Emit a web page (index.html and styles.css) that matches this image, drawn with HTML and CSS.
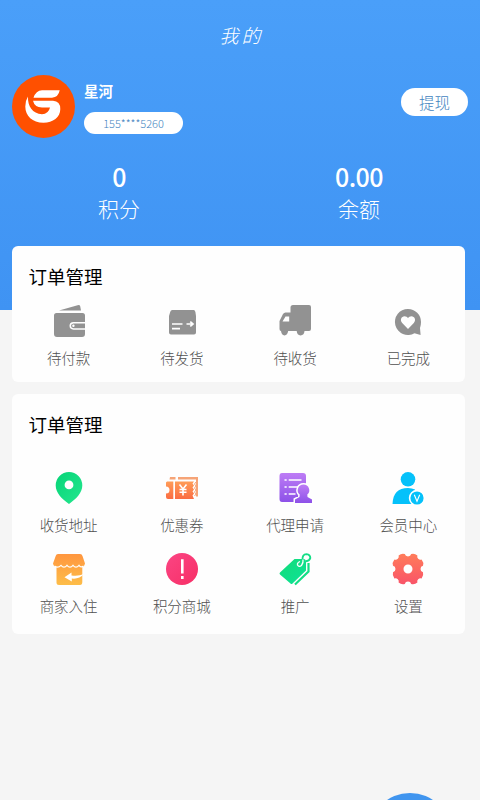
FILE: index.html
```html
<!DOCTYPE html>
<html lang="zh-CN">
<head>
<meta charset="utf-8">
<title>我的</title>
<link rel="stylesheet" href="styles.css">
</head>
<body>
<div class="screen">
  <header class="hero">
    <h1 class="page-title">我的</h1>
    <div class="profile">
      <svg class="avatar" viewBox="0 0 63 63"><circle cx="31.5" cy="31.5" r="31.5" fill="#ff5000"/><path d="M21.500 22.800Q24 15.200 30 15.200H47.700Q46.500 22 40 22.800ZM21 25.700H41Q48.300 26 48.300 34C48.300 42.500 41 47.700 31.500 47.700C20.500 47.700 13.300 41 13.300 31.500Q13.300 25.500 16 21.500C15.500 31 20.500 38.800 30 39.200Q36.500 39 38 32.500H30Q22.500 32.300 21 25.700Z" fill="#fff"/></svg>
      <div class="identity">
        <div class="name">星河</div>
        <div class="phone">155****5260</div>
      </div>
      <button class="withdraw">提现</button>
    </div>
    <div class="stats">
      <div><div class="value">0</div><div class="caption">积分</div></div>
      <div><div class="value">0.00</div><div class="caption">余额</div></div>
    </div>
  </header>

  <main class="cards">
    <section class="card orders">
      <h2>订单管理</h2>
      <div class="grid">
        <div class="item"><svg viewBox="0 0 32 32" fill="#929292"><path d="M6 5.500 25.500 0Q27 0 27.200 1.200L28 5.500Z"/><path d="M3.500 8H29.500Q32 8 32 10.500V17H20.500Q16.500 17.200 16.500 20.800Q16.500 24.500 20.500 24.700H32V29Q32 32 29 32H4Q1 32 1 29V10.500Q1 8 3.500 8Z"/><path d="M32 18.500H20.500Q18 18.700 18 20.800Q18 23 20.500 23.200H32Z"/><circle cx="20.400" cy="20.800" r="1.200" fill="#fff"/></svg><span>待付款</span></div>
        <div class="item"><svg viewBox="0 0 32 32"><path d="M6.300 5H27.700Q29 5 29.400 7L30 11V27.500Q30 29.500 28 29.500H5Q3 29.500 3 27.500V11L4.200 7Q4.700 5 6.300 5Z" fill="#929292"/><path d="M6 19H16.500M6 23.700H14M20.500 19H26.500M24.300 16.600 27 19 24.300 21.400" fill="none" stroke="#fff" stroke-width="1.700"/></svg><span>待发货</span></div>
        <div class="item"><svg viewBox="0 0 32 32"><path d="M14 0H30Q32 0 32 2V24Q32 26 30 26H25.500Q25.300 30 21.500 30.500Q18 30 17.700 26H9.200Q8.500 30 5.500 30.500Q2.500 30 2 26Q.5 25.800 .5 24V16L4 9Q5 7.500 6.500 7.500H11.500V2.500Q11.500 0 14 0Z" fill="#929292"/><path d="M6.500 11.500H10.200V16.500H3.500Z" fill="#fff"/></svg><span>待收货</span></div>
        <div class="item"><svg viewBox="0 0 32 32"><path d="M16 4A13 13 0 1 0 22.500 28.200L28.600 30 28 23Q29 20 29 17A13 13 0 0 0 16 4Z" fill="#929292"/><path d="M16 24 10.200 18C7.500 15 9.500 11.300 12.500 11.300Q15 11.300 16 13Q17 11.300 19.500 11.300C22.500 11.300 24.500 15 21.800 18Z" fill="#fff"/></svg><span>已完成</span></div>
      </div>
    </section>

    <section class="card services">
      <h2>订单管理</h2>
      <div class="grid">
        <div class="item"><svg viewBox="0 0 32 32"><defs><linearGradient id="pin" x2="1" y2="1"><stop stop-color="#06d477"/><stop offset="1" stop-color="#25e78f"/></linearGradient></defs><path fill-rule="evenodd" d="M16 0A13.300 13.300 0 0 1 29.300 13.500C29.300 21 23 27 16 32C9 27 2.700 21 2.700 13.500A13.300 13.300 0 0 1 16 0ZM16 8.500A4.400 4.400 0 1 0 16 17.300A4.400 4.400 0 1 0 16 8.500Z" fill="url(#pin)"/></svg><span>收货地址</span></div>
        <div class="item"><svg viewBox="0 0 32 32"><defs><linearGradient id="ticket" x2="0" y2="1"><stop stop-color="#ff9d58"/><stop offset="1" stop-color="#fb6c42"/></linearGradient></defs><path d="M4 5H9.500V7.500H3.500ZM12 5H32V24.500H30V7.500H12Z" fill="#f6a477"/><path d="M1 9.500H7.300V27H2Q0 27 0 25V21.500A3.500 3.500 0 0 0 0 14.500V10.500ZM9 9.500H28L26.500 11.500 28 13.500 26.500 15.500 28 17.500 26.500 19.500 28 21.500 26.500 23.500 28 27H9Z" fill="url(#ticket)"/><path d="M30 10 28.500 12 30 14 28.500 16 30 18 28.500 20 30 22 28.500 24" fill="none" stroke="#f6a477"/><path d="M13.500 12.500 17 17 20.500 12.500M17 16.500V23.500M13.500 17.500H20.500M13.500 20.300H20.500" fill="none" stroke="#fff" stroke-width="1.600"/></svg><span>优惠券</span></div>
        <div class="item"><svg viewBox="0 0 32 32"><defs><linearGradient id="doc" x2="0" y2="1"><stop stop-color="#bd7cf5"/><stop offset="1" stop-color="#8d51e8"/></linearGradient></defs><path d="M3 1H24Q27 1 27 4V30H3Q.5 30 .5 27V4Q.5 1 3 1Z" fill="url(#doc)"/><path d="M5.500 8H7.700M9.700 8H22.500M5.500 15H7.700M9.700 15H19M5.500 22H7.700M9.700 22H16.500" stroke="#fff" stroke-width="1.600"/><path d="M24.500 12.500A5.700 5.700 0 0 0 20.700 22.500L20.500 25L16 27.500V31H33V27.500L28.500 25L28.300 22.500A5.700 5.700 0 0 0 24.500 12.500Z" fill="url(#doc)" stroke="#fff" stroke-width="3" paint-order="stroke"/></svg><span>代理申请</span></div>
        <div class="item"><svg viewBox="0 0 32 32"><circle cx="16" cy="7.300" r="7.300" fill="#05c1fa"/><path d="M.5 32Q1 16 16 16Q20 16 23 17.500V32Z" fill="#05c1fa"/><circle cx="25" cy="26" r="7.400" fill="#05c1fa" stroke="#fff" stroke-width="1.600"/><path d="M22.300 22.700 25 29.300 27.700 22.700" fill="none" stroke="#fff" stroke-width="1.100"/></svg><span>会员中心</span></div>
        <div class="item"><svg viewBox="0 0 32 32"><defs><linearGradient id="shop" x2="0" y2="1"><stop stop-color="#ff963f"/><stop offset="1" stop-color="#fdbd48"/></linearGradient></defs><path d="M5 1H27Q29 1 29.500 3L32 10.500Q31 14 29.300 14V29Q29.300 32 27 32H6Q3.500 32 3.500 29.500V14Q.5 13.500 0 10.500L2.700 3Q3.200 1 5 1Z" fill="url(#shop)"/><path d="M1.500 13Q5 15.500 8 12.300Q11 16 14 12.300Q17 16 20 12.300Q23 16 26 12.300Q28 15 30.500 13" fill="none" stroke="#fff" stroke-width="1.200"/><path d="M31 21Q25.500 23.500 18.500 22.500V19.500L11.500 24.300 18.800 28.500V25.500Q26 26.500 31 21Z" fill="#fff"/></svg><span>商家入住</span></div>
        <div class="item"><svg viewBox="0 0 32 32"><defs><linearGradient id="alert" x2="1" y2="1"><stop stop-color="#fb4584"/><stop offset="1" stop-color="#f72f66"/></linearGradient></defs><circle cx="16" cy="16" r="16" fill="url(#alert)"/><path d="M16.300 6.300V20.500M16.300 23V26" stroke="#fff" stroke-width="2.600"/></svg><span>积分商城</span></div>
        <div class="item"><svg viewBox="0 0 32 32"><defs><linearGradient id="tag" x2="1" y2="1"><stop stop-color="#13dc78"/><stop offset="1" stop-color="#0ce298"/></linearGradient></defs><path d="M15.500 6H24.500Q27 6 27 8.500V17.500L13.500 30.500Q12.500 31.500 11.500 30.500L1 21.500Q0 20.500 1 19.500Z" fill="url(#tag)"/><path d="M29.500 10V18.500L16 31.500" fill="none" stroke="#13de86" stroke-width="2.200"/><path d="M23.500 7Q23 1.300 27.500 1.100Q31.300 1.500 31.300 5Q30.500 8 27 8.300" fill="none" stroke="#13de86" stroke-width="1.900"/><path d="M21 8.500Q18 9.500 18.500 12Q20 14.500 22.500 12.500Q24.500 10 24 6.500" fill="none" stroke="#fff" stroke-width="1.300"/></svg><span>推广</span></div>
        <div class="item"><svg viewBox="0 0 32 32"><defs><linearGradient id="gear" x2="0" y2="1"><stop stop-color="#ff7c5a"/><stop offset="1" stop-color="#f95468"/></linearGradient></defs><path fill-rule="evenodd" d="M12.800 1A3.300 3.300 0 0 0 19.200 1Q22.500 0 25.400 2.400A3.300 3.300 0 0 0 29.600 6.600Q32 9.500 31 12.800A3.300 3.300 0 0 0 31 19.200Q32 22.500 29.600 25.400A3.300 3.300 0 0 0 25.400 29.600Q22.500 32 19.200 31A3.300 3.300 0 0 0 12.800 31Q9.500 32 6.600 29.600A3.300 3.300 0 0 0 2.400 25.400Q0 22.500 1 19.200A3.300 3.300 0 0 0 1 12.800Q0 9.500 2.400 6.600A3.300 3.300 0 0 0 6.600 2.400Q9.500 0 12.800 1ZM16 11.500A4.500 4.500 0 1 0 16 20.500A4.500 4.500 0 1 0 16 11.500Z" fill="url(#gear)"/></svg><span>设置</span></div>
      </div>
    </section>
  </main>
  <div class="fab"></div>
</div>
</body>
</html>
```

FILE: styles.css
```css
* { box-sizing: border-box; }

body {
  margin: 0;
  font-family: "Noto Sans CJK SC", sans-serif;
  background: #f5f5f5;
}

.screen {
  position: relative;
  width: 480px;
  height: 800px;
  overflow: hidden;
}

.hero {
  height: 310px;
  background: linear-gradient(#4a9ff9, #3f93f3);
  color: #fff;
}

.page-title {
  margin: 0;
  padding-top: 20px;
  height: 75px;
  font-size: 19px;
  line-height: 30px;
  font-weight: 300;
  font-style: italic;
  letter-spacing: 3px;
  text-indent: 3px;
  text-align: center;
}

.profile {
  display: flex;
  height: 63px;
  padding: 0 12px;
}

.avatar { width: 63px; height: 63px; }

.identity { margin-left: 9px; }

.name {
  height: 36.500px;
  line-height: 32px;
  font-size: 14.500px;
  font-weight: 700;
}

.phone {
  width: 99px;
  height: 22px;
  border-radius: 11px;
  background: #fff;
  color: #4384c0;
  font-size: 11px;
  font-weight: 300;
  line-height: 22px;
  text-align: center;
}

.withdraw {
  width: 67px;
  height: 28px;
  margin: 12.500px 0 0 auto;
  padding: 0;
  border: 0;
  border-radius: 14px;
  background: #fff;
  color: #4384c0;
  font: 300 15.500px/28px "Noto Sans CJK SC", sans-serif;
}

.stats {
  display: grid;
  grid-template-columns: 1fr 1fr;
  margin: 23px 1px 0 -1px;
  text-align: center;
}

.value {
  font-size: 25px;
  font-weight: 500;
  line-height: 31px;
  letter-spacing: -0.600px;
}

.caption { font-size: 21px; line-height: 32px; font-weight: 300; }

.cards {
  position: relative;
  display: flex;
  flex-direction: column;
  gap: 12px;
  width: 453px;
  margin: -64px 0 0 12px;
}

.card {
  border-radius: 6px;
  background: #fefefe;
}

.card h2 {
  margin: 0;
  padding-left: 16.500px;
  font-size: 18.500px;
  line-height: 30px;
  font-weight: 400;
  color: #000;
}

.orders { height: 136px; padding-top: 15px; }
.services { height: 240px; padding-top: 15px; }

.grid {
  display: grid;
  grid-template-columns: repeat(4, 1fr);
  row-gap: 17px;
}

.orders .grid { padding-top: 14px; }
.services .grid { padding-top: 33px; }

.item {
  display: flex;
  flex-direction: column;
  align-items: center;
  height: 64px;
  color: #505050;
  font-size: 14.500px;
  font-weight: 300;
  line-height: 20px;
}

.item svg {
  width: 32px;
  height: 32px;
  margin-bottom: 11px;
  overflow: visible;
}

.fab {
  position: absolute;
  left: 369px;
  top: 793px;
  width: 82px;
  height: 82px;
  border-radius: 50%;
  background: #4095ef;
}
```
